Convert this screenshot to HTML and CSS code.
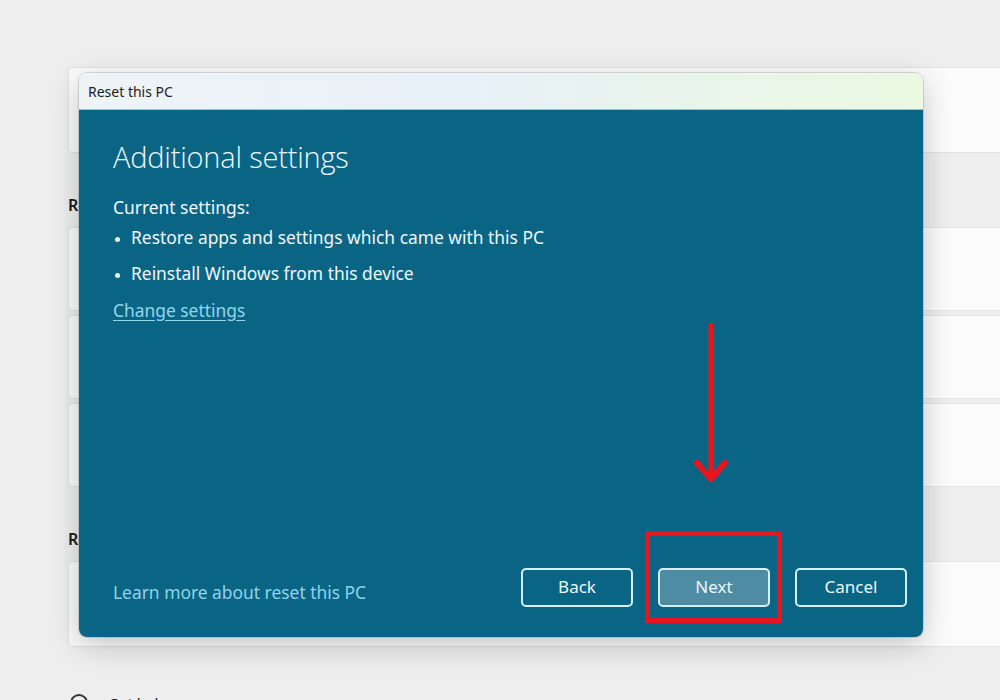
FILE: index.html
```html
<!DOCTYPE html>
<html>
<head>
<meta charset="utf-8">
<link rel="stylesheet" href="styles.css">
</head>
<body>
<div class="page">
  <div class="card card-top"></div>
  <div class="heading">Reset options</div>
  <div class="group">
    <div class="card row"></div>
    <div class="card row"></div>
    <div class="card row"></div>
  </div>
  <div class="heading heading2">Related support</div>
  <div class="card row last"></div>
  <div class="help"><span class="help-icon"></span><span>Get help</span></div>
</div>

<div class="dialog">
  <div class="titlebar">Reset this PC</div>
  <div class="body">
    <h1 class="title">Additional settings</h1>
    <div class="current">Current settings:</div>
    <ul class="list">
      <li>Restore apps and settings which came with this PC</li>
      <li>Reinstall Windows from this device</li>
    </ul>
    <a class="change">Change settings</a>
    <div class="spacer"></div>
    <div class="footer">
      <a class="learn">Learn more about reset this PC</a>
      <div class="buttons">
        <button class="btn">Back</button>
        <button class="btn primary">Next</button>
        <button class="btn">Cancel</button>
      </div>
    </div>
  </div>
  <svg class="arrow" width="40" height="170" viewBox="0 0 40 170">
    <line x1="20" y1="2" x2="20" y2="150" stroke="#e8141e" stroke-width="5" stroke-linecap="round"/>
    <polyline points="6,140 20,156 34,140" fill="none" stroke="#e8141e" stroke-width="6" stroke-linecap="round" stroke-linejoin="round"/>
  </svg>
  <div class="highlight"></div>
</div>
</body>
</html>
```
FILE: styles.css
```css
html, body {
  margin: 0;
  padding: 0;
}
body {
  width: 1000px;
  height: 700px;
  overflow: hidden;
  background: #eeeeee;
  font-family: "Noto Sans", "Open Sans", sans-serif;
  position: relative;
}
.page {
  padding: 67px 0 0 68px;
  display: flex;
  flex-direction: column;
}
.card {
  background: #fbfbfb;
  border: 1px solid #e2e2e2;
  border-right: none;
  border-radius: 5px 0 0 5px;
  box-sizing: border-box;
}
.card-top {
  height: 86px;
}
.heading {
  height: 74px;
  display: flex;
  align-items: flex-start;
  font-size: 16px;
  font-weight: 600;
  color: #1a1a1a;
  line-height: 20px;
  box-sizing: border-box;
  padding-top: 42px;
}
.group {
  display: flex;
  flex-direction: column;
  gap: 4px;
}
.row {
  height: 84px;
}
.last {
  height: 86px;
}
.help {
  display: flex;
  align-items: center;
  gap: 20px;
  margin-top: 46px;
  padding-left: 2px;
  font-size: 15px;
  color: #1a1a1a;
}
.help-icon {
  width: 14px;
  height: 14px;
  border: 2px solid #333;
  border-radius: 50%;
}

.dialog {
  position: absolute;
  left: 79px;
  top: 73px;
  width: 844px;
  height: 564px;
  border-radius: 8px;
  box-shadow: 0 8px 30px rgba(0, 0, 0, 0.22), 0 0 0 1px rgba(0, 0, 0, 0.12);
  display: flex;
  flex-direction: column;
  overflow: hidden;
}
.titlebar {
  height: 37px;
  flex: none;
  background: linear-gradient(90deg, #eef3f6 0%, #e8f1f8 45%, #e8f5ea 75%, #ebf8e2 100%);
  border-bottom: 1px solid #8cc8d6;
  box-sizing: border-box;
  font-family: "Noto Sans", sans-serif;
  font-size: 14px;
  color: #1c1c1c;
  padding: 9px 0 0 9px;
}
.body {
  flex: 1;
  background: #0a6584;
  color: #eef7fa;
  display: flex;
  flex-direction: column;
  padding: 27px 16px 30px 34px;
}
.title {
  margin: 0;
  font-family: "Open Sans", sans-serif;
  font-weight: 300;
  font-size: 29px;
  line-height: 40px;
  color: #eef7fa;
  letter-spacing: -0.2px;
}
.current {
  margin-top: 18px;
  font-size: 17.4px;
  line-height: 24px;
}
.list {
  margin: 6px 0 0 0;
  padding: 0 0 0 18px;
  font-size: 17.4px;
  line-height: 24px;
}
.list li {
  margin-bottom: 12px;
}
.list li::marker {
  font-size: 13px;
}
.change {
  margin-top: 1px;
  font-size: 17.4px;
  line-height: 24px;
  color: #92d6ee;
  text-decoration: underline;
  text-underline-offset: 3px;
  align-self: flex-start;
}
.spacer {
  flex: 1;
}
.footer {
  display: flex;
  align-items: center;
  justify-content: space-between;
}
.learn {
  font-size: 17.4px;
  color: #8fd3ea;
  margin-top: 8px;
}
.buttons {
  display: flex;
  gap: 25px;
}
.btn {
  width: 112px;
  height: 39px;
  box-sizing: border-box;
  border: 2px solid #d4f0f6;
  border-radius: 5px;
  background: transparent;
  color: #eef7fa;
  font-family: "Noto Sans", sans-serif;
  font-size: 17px;
  padding: 0 0 2px 0;
}
.primary {
  background: #4d8ca3;
}
.arrow {
  position: absolute;
  left: 612px;
  top: 250px;
}
.highlight {
  position: absolute;
  left: 566px;
  top: 458px;
  width: 137px;
  height: 92px;
  box-sizing: border-box;
  border: 5px solid #e8141e;
  border-radius: 2px;
}
```
